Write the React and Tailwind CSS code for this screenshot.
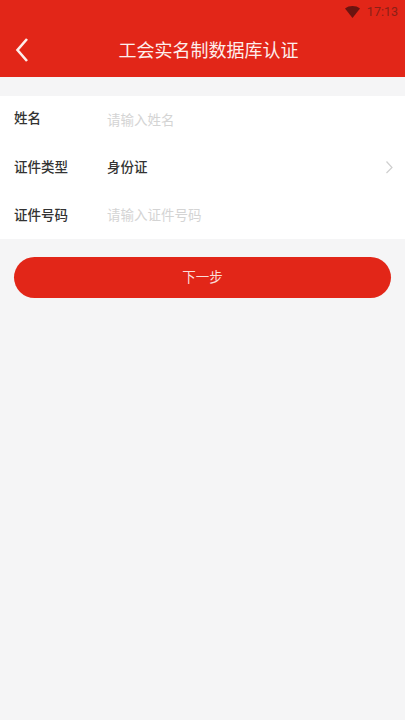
const FONT = "font-['Noto_Sans_CJK_SC','Noto_Sans',sans-serif]";

function Wifi() {
  return (
    <svg width="15" height="12" viewBox="0 0 15 12" className="block">
      <path d="M0 2.5C4 -0.8 11 -0.8 15 2.5L7.5 12Z" fill="#6b1410" />
    </svg>
  );
}

function Row({ label, placeholder, value, arrow, labelClass = "" }) {
  return (
    <div className="flex h-[47.5px] items-center pl-[14px] pr-[11px]">
      <div className={`w-[93px] text-[13.5px] leading-none font-medium text-[#333333] ${labelClass}`}>{label}</div>
      {value ? (
        <div className="flex-1 pb-[1px] text-[13.5px] leading-none font-medium text-[#333333]">{value}</div>
      ) : (
        <div className="flex-1 text-[13.5px] leading-none text-[#d4d4d4]">{placeholder}</div>
      )}
      {arrow && (
        <svg width="9" height="14" viewBox="0 0 9 14" fill="none" className="block">
          <path d="M1.5 1.5L7 7.5L1.5 13" stroke="#cfcfcf" strokeWidth="1.2" />
        </svg>
      )}
    </div>
  );
}

export default function App() {
  return (
    <div className={`flex h-[720px] w-[405px] flex-col overflow-hidden bg-[#f5f5f6] ${FONT}`}>
      <header className="h-[77px] bg-[#e22618]">
        <div className="flex h-[24px] items-center justify-end gap-[7px] pr-[7px]">
          <Wifi />
          <span className="text-[12.5px] leading-none text-[#8a2017] font-['Roboto',sans-serif]">17:13</span>
        </div>
        <div className="relative flex h-[53px] items-center justify-center">
          <svg width="14" height="26" viewBox="0 0 14 26" fill="none" className="absolute left-[15px] top-[13px] block">
            <path d="M12 2L2.5 13L12 24" stroke="#fdeeec" strokeWidth="2.6" />
          </svg>
          <h1 className="ml-[12px] pb-[4px] text-[18px] leading-none font-normal text-[#fdeeec]">工会实名制数据库认证</h1>
        </div>
      </header>

      <section className="mt-[19px] bg-white">
        <Row label="姓名" placeholder="请输入姓名" labelClass="pb-[4px]" />
        <Row label="证件类型" value="身份证" labelClass="pb-[1px]" arrow />
        <Row label="证件号码" placeholder="请输入证件号码" />
      </section>

      <button className="mx-[14px] mt-[18px] flex h-[41px] items-center justify-center rounded-full bg-[#e22618] text-[13.5px] leading-none text-[#fbdcd8]">
        下一步
      </button>
    </div>
  );
}
